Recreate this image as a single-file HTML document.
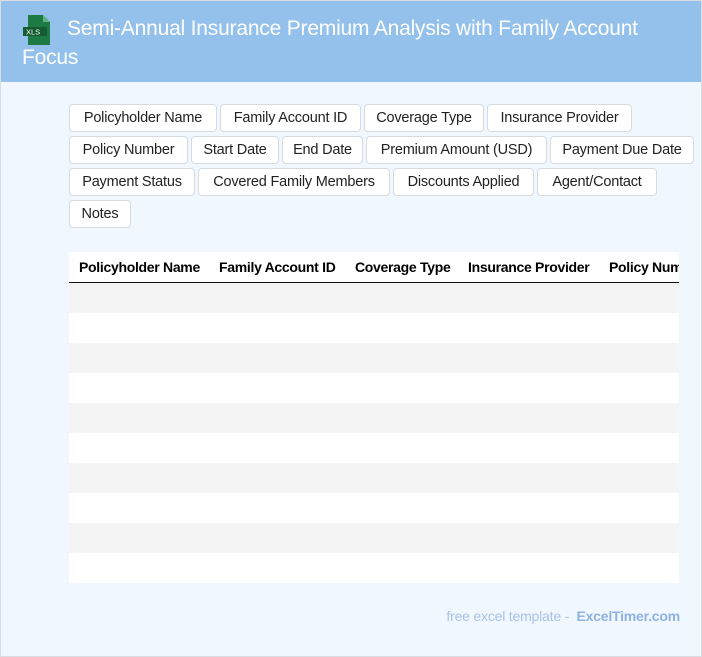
<!DOCTYPE html><html><head><style>
body{margin:0;width:702px;height:657px;overflow:hidden;background:#f0f7ff;font-family:"Liberation Sans",sans-serif;}
.wrap{position:absolute;left:0;top:0;width:700px;height:655px;border:1px solid #d8dde3;background:#f0f7ff;}
.hd{height:81px;background:#93c1ec;position:relative;}
.hd h1{margin:0;position:absolute;left:21px;top:13px;width:640px;font-weight:normal;color:#fff;font-size:21px;line-height:29px;text-indent:45px;letter-spacing:-0.2px;}
.ic{position:absolute;left:22px;top:14px;}
.tags{position:absolute;left:68px;top:103px;width:632px;}
.t{float:left;box-sizing:border-box;height:28px;line-height:26px;text-align:center;white-space:nowrap;margin:0 3px 4px 0;background:#fff;border:1px solid #d6dbe0;border-radius:4px;font-size:14.5px;color:#222;letter-spacing:-0.2px;}
.tb{position:absolute;left:68px;top:251px;width:610px;height:331px;background:#fff;overflow:hidden;}
.th{height:30px;border-bottom:1.5px solid #111;white-space:nowrap;font-weight:bold;font-size:14px;line-height:30px;letter-spacing:-0.3px;position:relative;}
.th span{position:absolute;top:0;}
.r{height:30px;}
.ft{position:absolute;right:21px;top:607px;font-size:14px;color:#a9c2e6;letter-spacing:-0.2px;}
.ft b{color:#8fb2e2;}
</style></head><body><div class="wrap">
<div class="hd"><svg class="ic" width="30" height="30" viewBox="0 0 30 30"><path d="M5 0h15l7 7v23H5z" fill="#1e7a45"/><path d="M20 0l7 7h-7z" fill="#5fb37f"/><rect x="0" y="12" width="24" height="9" fill="#155c33"/><text x="3" y="19.5" font-size="7.5" fill="#fff" font-family="Liberation Sans">XLS</text></svg>
<h1>Semi-Annual Insurance Premium Analysis with Family Account Focus</h1></div>
<div class="tags">
<div class="t" style="width:148px">Policyholder Name</div><div class="t" style="width:141px">Family Account ID</div><div class="t" style="width:120px">Coverage Type</div><div class="t" style="width:145px">Insurance Provider</div>
<div class="t" style="width:119px;clear:left">Policy Number</div><div class="t" style="width:88px">Start Date</div><div class="t" style="width:81px">End Date</div><div class="t" style="width:181px">Premium Amount (USD)</div><div class="t" style="width:144px">Payment Due Date</div>
<div class="t" style="width:126px;clear:left">Payment Status</div><div class="t" style="width:192px">Covered Family Members</div><div class="t" style="width:141px">Discounts Applied</div><div class="t" style="width:120px">Agent/Contact</div>
<div class="t" style="width:62px;clear:left">Notes</div></div>
<div class="tb"><div class="th"><span style="left:10px">Policyholder Name</span><span style="left:150px">Family Account ID</span><span style="left:286px">Coverage Type</span><span style="left:399px">Insurance Provider</span><span style="left:540px">Policy Number</span></div>
<div><div class="r" style="background:#f4f4f4"></div><div class="r" style="background:#fff"></div><div class="r" style="background:#f4f4f4"></div><div class="r" style="background:#fff"></div><div class="r" style="background:#f4f4f4"></div><div class="r" style="background:#fff"></div><div class="r" style="background:#f4f4f4"></div><div class="r" style="background:#fff"></div><div class="r" style="background:#f4f4f4"></div><div class="r" style="background:#fff"></div></div></div>
<div class="ft">free excel template - &nbsp;<b>ExcelTimer.com</b></div>
</div></body></html>
